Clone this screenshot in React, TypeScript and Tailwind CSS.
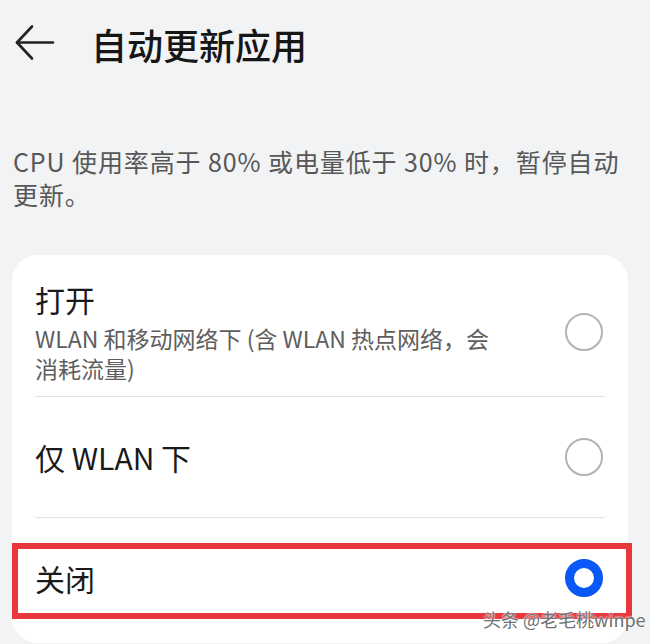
import React from 'react';

const font = { fontFamily: '"Noto Sans CJK SC", "Noto Sans", sans-serif' };

function Radio({ checked }: { checked?: boolean }) {
  if (checked) {
    return <div className="w-[38px] h-[38px] rounded-full border-[9px] border-[#0a59f7] bg-white shrink-0" />;
  }
  return <div className="w-[38px] h-[38px] rounded-full border-2 border-[#b3b3b3] bg-white shrink-0" />;
}

function BackArrow() {
  return (
    <svg width="40" height="40" viewBox="0 0 40 40" fill="none" stroke="#222" strokeWidth="2.6" strokeLinecap="round" strokeLinejoin="round">
      <path d="M2 18.5h36" />
      <path d="M17 2.5L2 18.5l15 16" />
    </svg>
  );
}

export default function App() {
  return (
    <div className="relative h-[644px] overflow-hidden bg-[#f1f3f5]" style={font}>
      <div className="flex items-center h-[88px] pl-[15px]">
        <BackArrow />
        <h1 className="ml-[36px] text-[36px] leading-none font-medium text-[#161616]">自动更新应用</h1>
      </div>

      <p className="mt-[57px] px-[13px] text-[25px] leading-[33px] tracking-[0.9px] text-[#575757] whitespace-nowrap">
        CPU 使用率高于 80% 或电量低于 30% 时，暂停自动
        <br />
        更新。
      </p>

      <div className="mt-[44px] mx-[12px] w-[616px] bg-white rounded-[26px] pb-[5px]">
        <div className="flex items-center justify-between pl-[23px] pr-[25px] pt-[26px] pb-[13px]">
          <div>
            <div className="text-[30px] leading-[36px] text-[#1a1a1a]">打开</div>
            <div className="mt-[6px] text-[23px] text-[#5e5e5e] whitespace-nowrap">
              <div className="leading-[30px]">WLAN 和移动网络下 (含 WLAN 热点网络，会</div>
              <div className="leading-[30px]">消耗流量)</div>
            </div>
          </div>
          <Radio />
        </div>
        <div className="mx-[23px] h-px bg-[#e3e3e3]" />
        <div className="flex items-center justify-between h-[120px] pl-[23px] pr-[25px]">
          <div className="text-[30px] leading-[36px] text-[#1a1a1a]">仅 WLAN 下</div>
          <Radio />
        </div>
        <div className="mx-[23px] h-px bg-[#e3e3e3]" />
        <div className="relative flex items-center justify-between h-[120px] pl-[23px] pr-[25px]">
          <div className="text-[30px] leading-[36px] text-[#1a1a1a]">关闭</div>
          <Radio checked />
          <div className="absolute left-0 -right-[4px] top-[25px] h-[76px] border-[6px] border-[#e8383d] pointer-events-none" />
        </div>
      </div>

      <div className="absolute left-[483px] top-[607px] text-[18px] leading-[24px] text-[#707070] whitespace-nowrap [text-shadow:0_0_2px_#fff,0_0_2px_#fff]">
        头条 @老毛桃winpe
      </div>
    </div>
  );
}
